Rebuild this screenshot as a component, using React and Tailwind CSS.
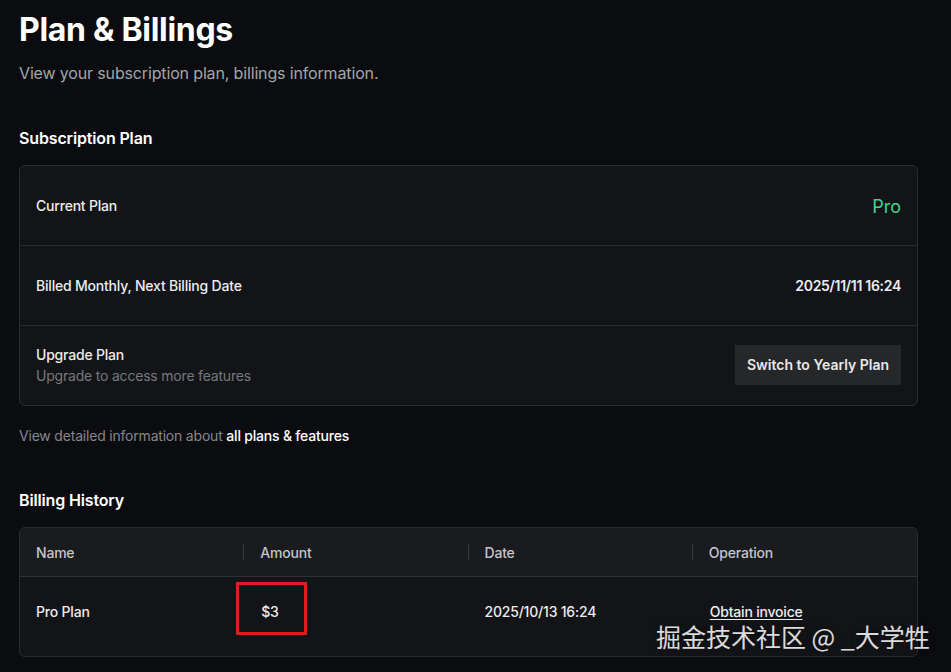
import React from "react";

const plan = [
  { label: "Current Plan", value: "Pro" },
  { label: "Billed Monthly, Next Billing Date", value: "2025/11/11 16:24" },
];

const columns = ["Name", "Amount", "Date", "Operation"];

export default function App() {
  return (
    <div
      className="relative min-h-[672px] w-full overflow-hidden bg-[#0b0c0f] text-white"
      style={{ fontFamily: "Inter, 'Noto Sans CJK SC', sans-serif" }}
    >
      <div className="pl-[19px] pr-[33px] pt-[11px]">
        <h1 className="text-[32px] leading-[38px] font-bold tracking-[-0.3px]">Plan &amp; Billings</h1>
        <p className="mt-[12px] text-[16px] leading-[24px] tracking-[-0.15px] text-[#a3a4aa]">
          View your subscription plan, billings information.
        </p>

        <h2 className="mt-[41px] text-[16px] leading-[24px] font-semibold tracking-[-0.15px]">Subscription Plan</h2>
        <div className="mt-[15px] rounded-md border border-[#2b2c30] bg-[#131417] tracking-[-0.2px]">
          {plan.map((row) => (
            <div
              key={row.label}
              className="flex h-[80px] items-center justify-between border-b border-[#2b2c30] px-4"
            >
              <span className="text-[14px] font-medium text-[#ececee]">{row.label}</span>
              {row.value === "Pro" ? (
                <span className="pt-[2px] text-[18px] tracking-normal text-[#3fd68f]">Pro</span>
              ) : (
                <span className="text-[14px] font-semibold tracking-[-0.3px] text-[#ececee]">{row.value}</span>
              )}
            </div>
          ))}
          <div className="flex h-[79px] items-center justify-between px-4">
            <div className="flex flex-col">
              <span className="text-[14px] leading-[20px] font-medium text-[#ececee]">Upgrade Plan</span>
              <span className="text-[14px] leading-[22px] text-[#77787e]">Upgrade to access more features</span>
            </div>
            <button className="-mt-[2px] h-[40px] w-[166px] bg-[#262729] text-[14px] font-semibold tracking-normal text-[#e8e8ea]">
              Switch to Yearly Plan
            </button>
          </div>
        </div>

        <p className="mt-[20px] text-[14px] leading-[20px] tracking-[-0.2px] text-[#85868c]">
          View detailed information about{" "}
          <span className="font-medium text-white">all plans &amp; features</span>
        </p>

        <h2 className="mt-[42px] text-[16px] leading-[24px] font-semibold tracking-[-0.15px]">Billing History</h2>
        <div className="mt-[15px] overflow-hidden rounded-md border border-[#2b2c30] bg-[#131417] tracking-[-0.2px]">
          <div className="grid h-[49px] grid-cols-4 border-b border-[#2f3034] bg-[#1a1b1e]">
            {columns.map((c, i) => (
              <div key={c} className="relative flex items-center px-4 text-[14px] font-medium text-[#c4c5ca]">
                {c}
                {i < columns.length - 1 && (
                  <span className="absolute right-0 top-1/2 h-[15px] w-px -translate-y-1/2 bg-[#3a3b3f]" />
                )}
              </div>
            ))}
          </div>
          <div className="grid h-[79px] grid-cols-4 pb-[10px] text-[14px] font-medium text-[#ececee]">
            <div className="flex items-center px-4">Pro Plan</div>
            <div className="flex items-center pl-[17px]">$3</div>
            <div className="flex items-center pl-[16px]">2025/10/13 16:24</div>
            <div className="flex items-center pl-[17px]">
              <a className="underline underline-offset-2">Obtain invoice</a>
            </div>
          </div>
        </div>
      </div>

      <div className="absolute left-[236px] top-[582px] h-[53px] w-[71px] border-[3px] border-[#d8201f]" />

      <div
        className="absolute left-[656px] top-[620px] whitespace-nowrap text-[25px] leading-[32px] text-white/85 [text-shadow:0_0_6px_rgba(0,0,0,0.6)]"
        style={{ fontFamily: "'Noto Sans CJK SC', sans-serif" }}
      >
        掘金技术社区 @ _大学牲
      </div>
    </div>
  );
}
